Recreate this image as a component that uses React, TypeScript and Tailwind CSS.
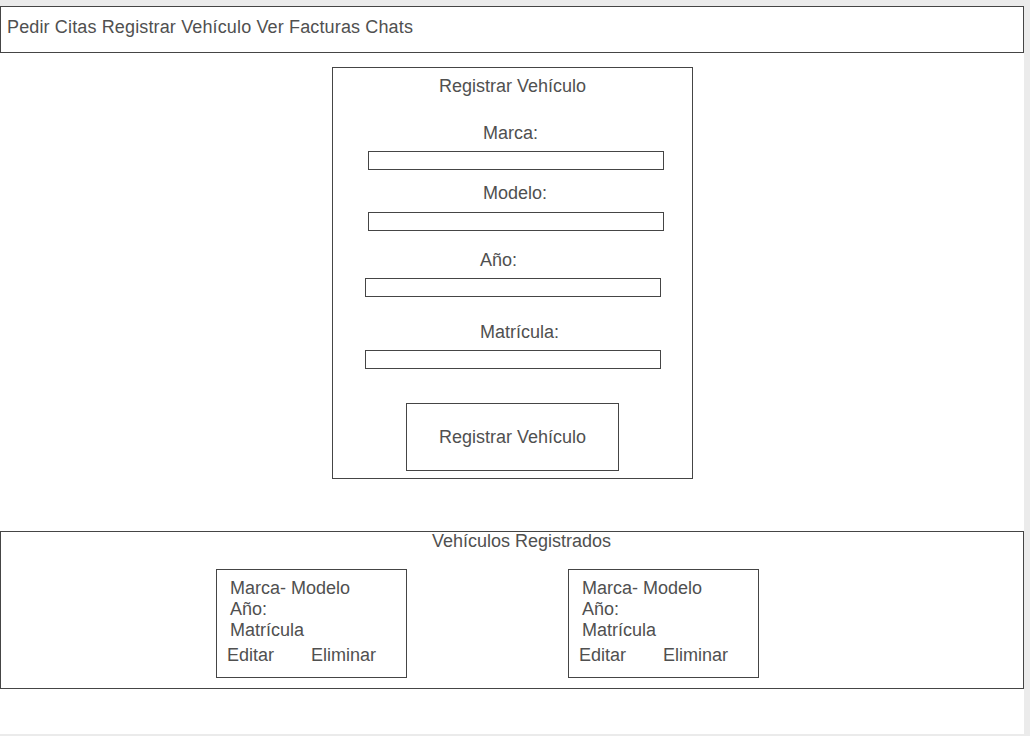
import React from "react";

const font = { fontFamily: '"Liberation Sans", Arial, sans-serif' };

function Card() {
  return (
    <div className="w-[191px] h-[109px] border border-[#454545] pt-[8px] text-[18px] leading-[21px]">
      <div className="pl-[13px]">Marca- Modelo</div>
      <div className="pl-[13px]">Año:</div>
      <div className="pl-[13px]">Matrícula</div>
      <div className="pl-[10px] mt-[4px] flex">
        <span className="w-[84px]">Editar</span>
        <span>Eliminar</span>
      </div>
    </div>
  );
}

export default function App() {
  return (
    <div
      className="w-[1030px] h-[736px] bg-[#ebebeb] pt-[6px] pr-[6px] pb-[2px] text-[#505050]"
      style={font}
    >
      <div className="w-[1024px] h-[728px] bg-white flex flex-col text-[18px] leading-[20px]">
        <nav className="h-[47px] border border-[#454545] pt-[10px] pl-[6px] tracking-[0.14px]">
          Pedir Citas Registrar Vehículo Ver Facturas Chats
        </nav>

        <form className="ml-[332px] mt-[14px] w-[361px] h-[412px] border border-[#454545] flex flex-col">
          <div className="mt-[8px] text-center">Registrar Vehículo</div>

          <label className="mt-[27px] ml-[150px]">Marca:</label>
          <div className="mt-[8px] ml-[35px] w-[296px] h-[19px] border border-[#454545]" />

          <label className="mt-[13px] ml-[150px]">Modelo:</label>
          <div className="mt-[9px] ml-[35px] w-[296px] h-[19px] border border-[#454545]" />

          <label className="mt-[19px] ml-[147px]">Año:</label>
          <div className="mt-[8px] ml-[32px] w-[296px] h-[19px] border border-[#454545]" />

          <label className="mt-[25px] ml-[147px]">Matrícula:</label>
          <div className="mt-[8px] ml-[32px] w-[296px] h-[19px] border border-[#454545]" />

          <div className="mt-[34px] ml-[73px] w-[213px] h-[68px] border border-[#454545] flex items-center justify-center">
            Registrar Vehículo
          </div>
        </form>

        <section className="mt-[52px] w-[1024px] h-[158px] border border-[#454545] flex flex-col">
          <div className="pl-[431px] leading-[18px]">Vehículos Registrados</div>
          <div className="mt-[19px] ml-[215px] flex gap-[161px]">
            <Card />
            <Card />
          </div>
        </section>
      </div>
    </div>
  );
}
